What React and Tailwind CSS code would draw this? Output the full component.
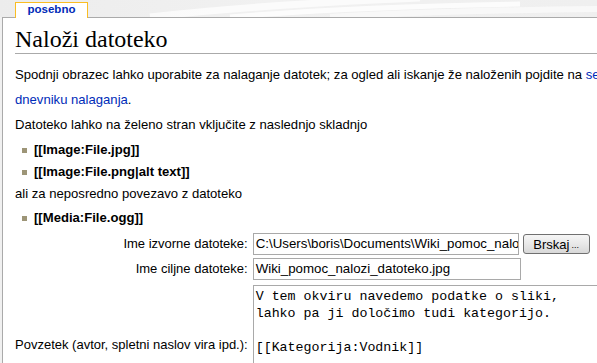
const items = ['[[Image:File.jpg]]', '[[Image:File.png|alt text]]'];

const Bullet = ({ children }) => (
  <li className="flex items-center h-[22px] pl-[7px] font-bold">
    <span className="w-[5px] h-[5px] bg-[#9d9577] mr-[7px] mt-px" />
    {children}
  </li>
);

const TopBackground = () => (
  <svg className="absolute inset-x-0 top-0 w-[597px] h-[17px]" viewBox="0 0 597 17" preserveAspectRatio="none">
    <defs>
      <linearGradient id="bgfade" x1="0" y1="0" x2="1" y2="0">
        <stop offset="0" stopColor="#ececec" />
        <stop offset="0.45" stopColor="#f1f1f1" />
        <stop offset="1" stopColor="#efefef" />
      </linearGradient>
    </defs>
    <rect width="597" height="17" fill="url(#bgfade)" />
    <path d="M150 17 C 220 9, 300 3, 420 -2" stroke="#ffffff" strokeWidth="7" fill="none" opacity="0.7" />
    <path d="M230 17 C 300 11, 400 6, 520 4" stroke="#ffffff" strokeWidth="5" fill="none" opacity="0.8" />
    <path d="M330 17 C 420 12, 500 10, 597 9" stroke="#fafafa" strokeWidth="6" fill="none" opacity="0.8" />
  </svg>
);

export default function App() {
  return (
    <div className="relative w-[597px] h-[363px] overflow-hidden bg-[#f0f0f0] font-['Liberation_Sans',Arial,sans-serif] text-[13.1px] text-black">
      <TopBackground />

      {/* tab row */}
      <div className="relative h-[17px] flex items-end pl-[15px]">
        <div className="relative z-10 -mb-px h-[16px] w-[73px] bg-white border border-b-0 border-[#fabd23] flex items-center justify-center text-[11.5px] font-bold text-[#002bb8] leading-none pb-px">
          posebno
        </div>
      </div>

      {/* content */}
      <div className="ml-[2px] w-[800px] h-[400px] bg-white border-l border-t border-[#aaaaaa] pl-[12px]">
        <h1 className="mt-[8px] font-['Liberation_Serif','Times_New_Roman',serif] text-[24px] leading-[27px] border-b border-[#aaaaaa] font-normal">
          Naloži datoteko
        </h1>

        <p className="mt-[8px] leading-[25px] whitespace-nowrap">
          Spodnji obrazec lahko uporabite za nalaganje datotek; za ogled ali iskanje že naloženih pojdite na{' '}
          <a className="text-[#002bb8]">seznam naloženih datotek</a> ali
          <br />
          <a className="text-[#002bb8]">dnevniku nalaganja</a>.
        </p>
        <p className="leading-[25px]">Datoteko lahko na želeno stran vključite z naslednjo skladnjo</p>

        <ul className="mt-[2px]">
          {items.map((t) => (
            <Bullet key={t}>{t}</Bullet>
          ))}
        </ul>
        <p className="leading-[22px]">ali za neposredno povezavo z datoteko</p>
        <ul className="mt-[2px]">
          <Bullet>[[Media:File.ogg]]</Bullet>
        </ul>

        <div className="mt-[4px] grid grid-cols-[auto_1fr] gap-x-[5px] items-center text-[13px]">
          <label className="text-right whitespace-nowrap">Ime izvorne datoteke:</label>
          <div className="flex items-center gap-[4px]">
            <div className="w-[266px] h-[22px] border border-[#a9a9a9] pl-[2px] flex items-center text-[13.3px] whitespace-nowrap overflow-hidden">
              C:\Users\boris\Documents\Wiki_pomoc_nalozi_datoteko.jpg
            </div>
            <button className="h-[20px] w-[67px] shrink-0 rounded-[3px] border border-[#707070] bg-[linear-gradient(#f6f6f6,#e8e8e8_50%,#d8d8d8)] text-[13px] leading-none flex items-center justify-center whitespace-nowrap">
              Brskaj <span className="text-[9px] ml-[2px] mt-[3px]">...</span>
            </button>
          </div>

          <label className="text-right whitespace-nowrap mt-[3px]">Ime ciljne datoteke:</label>
          <div className="mt-[3px] w-[268px] h-[22px] border border-[#a9a9a9] pl-[2px] flex items-center text-[13.3px] whitespace-nowrap">
            Wiki_pomoc_nalozi_datoteko.jpg
          </div>

          <label className="text-right whitespace-nowrap mt-[5px]">Povzetek (avtor, spletni naslov vira ipd.):</label>
          <textarea
            readOnly
            className="mt-[5px] w-[420px] h-[120px] border border-[#a9a9a9] px-[2px] py-[2px] resize-none overflow-hidden font-['Liberation_Mono','Courier_New',monospace] text-[13.3px] leading-[17px] outline-none"
            defaultValue={'V tem okviru navedemo podatke o sliki,\nlahko pa ji določimo tudi kategorijo.\n\n[[Kategorija:Vodnik]]'}
          />
        </div>
      </div>
    </div>
  );
}
